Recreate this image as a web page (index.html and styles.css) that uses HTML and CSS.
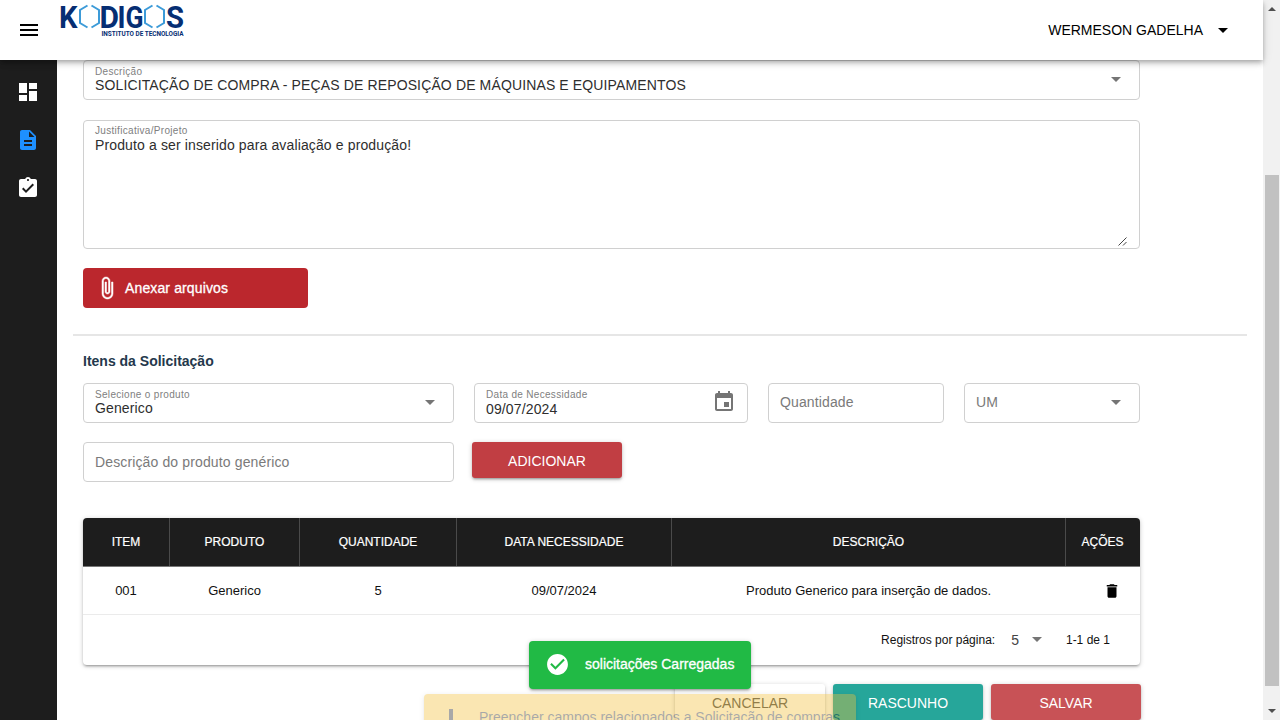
FILE: index.html
```html
<!DOCTYPE html>
<html lang="pt-BR">
<head>
<meta charset="utf-8">
<title>Kodigos - Solicitação de Compra</title>
<link rel="stylesheet" href="styles.css">
</head>
<body>
<div class="app">
  <header class="header">
    <svg class="menu" viewBox="0 0 24 24"><path d="M3 18h18v-2H3v2zm0-5h18v-2H3v2zm0-7v2h18V6H3z"/></svg>
    <svg class="logo" width="128" height="40" viewBox="0 0 128 40">
      <g class="logo-word">
        <text x="-1" y="28" textLength="18.500" lengthAdjust="spacingAndGlyphs">K</text>
        <text x="39.500" y="28" textLength="19.500" lengthAdjust="spacingAndGlyphs">D</text>
        <text x="57.500" y="28" textLength="8" lengthAdjust="spacingAndGlyphs">I</text>
        <text x="65.500" y="28" textLength="18" lengthAdjust="spacingAndGlyphs">G</text>
        <text x="106" y="28" textLength="18" lengthAdjust="spacingAndGlyphs">S</text>
      </g>
      <g class="logo-hex">
        <path d="M27.500 5.500 20 10v13l7.500 4.500M31.500 5.500 39 10v13l-7.500 4.500"/>
        <path d="M92.500 5.500 85 10v13l7.500 4.500M96.500 5.500 104 10v13l-7.500 4.500"/>
      </g>
      <text class="logo-sub" x="41.500" y="35.500" textLength="82" lengthAdjust="spacingAndGlyphs">INSTITUTO DE TECNOLOGIA</text>
    </svg>
    <div class="user">WERMESON GADELHA<svg viewBox="0 0 24 24"><path d="M7 10l5 5 5-5z"/></svg></div>
  </header>
  <div class="body">
    <nav class="side">
      <svg viewBox="0 0 24 24"><path d="M3 13h8V3H3v10zm0 8h8v-6H3v6zm10 0h8V11h-8v10zm0-18v6h8V3h-8z"/></svg>
      <svg class="active" viewBox="0 0 24 24"><path d="M14 2H6c-1.100 0-1.990.9-1.990 2L4 20c0 1.100.89 2 1.990 2H18c1.100 0 2-.9 2-2V8l-6-6zm2 16H8v-2h8v2zm0-4H8v-2h8v2zm-3-5V3.500L18.500 9H13z"/></svg>
      <svg viewBox="0 0 24 24"><path d="M19 3h-4.180C14.400 1.840 13.300 1 12 1s-2.400.84-2.820 2H5c-1.100 0-2 .9-2 2v14c0 1.100.9 2 2 2h14c1.100 0 2-.9 2-2V5c0-1.100-.9-2-2-2zm-7 0c.55 0 1 .45 1 1s-.45 1-1 1-1-.45-1-1 .45-1 1-1zm-2 14-4-4 1.410-1.410L10 14.170l6.590-6.590L18 9l-8 8z"/></svg>
    </nav>
    <main class="main">
      <div class="field"><div class="stack"><span class="label">Descrição</span><span class="value">SOLICITAÇÃO DE COMPRA - PEÇAS DE REPOSIÇÃO DE MÁQUINAS E EQUIPAMENTOS</span></div><svg class="caret" viewBox="0 0 24 24"><path d="M7 10l5 5 5-5z"/></svg></div>
      <div class="field area"><div class="stack"><span class="label">Justificativa/Projeto</span><span class="value">Produto a ser inserido para avaliação e produção!</span></div><svg class="grip" viewBox="0 0 9 9"><path d="M.5 8.500l8-8M5 8.500 8.500 5"/></svg></div>
      <div class="attach"><svg viewBox="0 0 24 24"><path d="M16.500 6v11.500c0 2.210-1.790 4-4 4s-4-1.790-4-4V5c0-1.380 1.120-2.500 2.500-2.500s2.500 1.120 2.500 2.500v10.500c0 .55-.45 1-1 1s-1-.45-1-1V6H10v9.500c0 1.380 1.120 2.500 2.500 2.500s2.500-1.120 2.500-2.500V5c0-2.210-1.790-4-4-4S7 2.790 7 5v12.500c0 3.040 2.460 5.500 5.500 5.500s5.500-2.460 5.500-5.500V6h-1.500z"/></svg><span>Anexar arquivos</span></div>
      <div class="rule"></div>
      <h2 class="title">Itens da Solicitação</h2>
      <div class="grid">
        <div class="field"><div class="stack"><span class="label">Selecione o produto</span><span class="value">Generico</span></div><svg class="caret" viewBox="0 0 24 24"><path d="M7 10l5 5 5-5z"/></svg></div>
        <div class="field"><div class="stack date"><span class="label">Data de Necessidade</span><span class="value">09/07/2024</span></div><svg class="cal" viewBox="0 0 24 24"><path d="M17 12h-5v5h5v-5zM16 1v2H8V1H6v2H5c-1.110 0-1.990.9-1.990 2L3 19c0 1.100.89 2 2 2h14c1.100 0 2-.9 2-2V5c0-1.100-.9-2-2-2h-1V1h-2zm3 18H5V8h14v11z"/></svg></div>
        <div class="field"><span class="hint up1">Quantidade</span></div>
        <div class="field"><span class="hint up1">UM</span><svg class="caret" viewBox="0 0 24 24"><path d="M7 10l5 5 5-5z"/></svg></div>
        <div class="field"><span class="hint">Descrição do produto genérico</span></div>
        <div class="btn add">ADICIONAR</div>
      </div>
      <div class="table">
        <div class="row head"><span>ITEM</span><span>PRODUTO</span><span>QUANTIDADE</span><span>DATA NECESSIDADE</span><span>DESCRIÇÃO</span><span>AÇÕES</span></div>
        <div class="row"><span>001</span><span>Generico</span><span>5</span><span>09/07/2024</span><span>Produto Generico para inserção de dados.</span><span class="del"><svg viewBox="0 0 24 24"><path d="M6 19c0 1.100.9 2 2 2h8c1.100 0 2-.9 2-2V7H6v12zM19 4h-3.500l-1-1h-5l-1 1H5v2h14V4z"/></svg></span></div>
        <div class="foot"><span>Registros por página:</span><span class="count">5</span><svg class="caret" viewBox="0 0 24 24"><path d="M7 10l5 5 5-5z"/></svg><span class="range">1-1 de 1</span></div>
      </div>
      <div class="actions"><div class="btn cancel">CANCELAR</div><div class="btn draft">RASCUNHO</div><div class="btn save">SALVAR</div></div>
    </main>
  </div>
</div>
<div class="scroll"><i class="up"></i><div class="thumb"></div><i class="down"></i></div>
<div class="toast warn"><svg viewBox="0 0 24 24"><path d="M10 3h4v12h-4zM10 17h4v4h-4z"/></svg><span>Preencher campos relacionados a Solicitação de compras</span></div>
<div class="toast ok"><svg viewBox="0 0 24 24"><path d="M12 2C6.480 2 2 6.480 2 12s4.480 10 10 10 10-4.480 10-10S17.520 2 12 2zm-2 15-5-5 1.410-1.410L10 14.170l7.590-7.590L19 8l-9 9z"/></svg><span>solicitações Carregadas</span></div>
</body>
</html>
```
FILE: styles.css
```css
* { box-sizing: border-box; }
body { margin: 0; width: 1280px; height: 720px; overflow: hidden; display: flex; position: relative; background: #fff; font: 14px/20px "Liberation Sans", Arial, sans-serif; color: #212121; }
svg { display: block; flex: none; fill: currentColor; }
.app { width: 1263px; height: 720px; display: flex; flex-direction: column; }
.header { height: 60px; flex: none; display: flex; background: #fff; color: #000; position: relative; z-index: 2; box-shadow: 0 2px 4px -1px rgba(0,0,0,.2), 0 4px 5px rgba(0,0,0,.14), 0 1px 10px rgba(0,0,0,.12); }
.menu { width: 24px; height: 24px; margin: 18px 0 0 17px; }
.logo { margin-left: 19px; overflow: visible; }
.logo-word { font: bold 32px Roboto, sans-serif; fill: #062e73; }
.logo-hex { fill: none; stroke: #3c9bd8; stroke-width: 2; }
.logo-sub { font: bold 6.600px Roboto, sans-serif; fill: #062e73; }
.user { margin: 20px 28px 0 auto; height: 20px; display: flex; align-items: center; }
.user svg { width: 24px; height: 24px; margin-left: 8px; }
.body { flex: 1; min-height: 0; display: flex; }
.side { width: 57px; flex: none; background: #1d1d1d; color: #fff; display: flex; flex-direction: column; align-items: center; gap: 24px; padding: 20px 1px 0 0; }
.side svg { width: 24px; height: 24px; }
.side .active { color: #1e90ff; }
.main { width: 1190px; padding: 0 0 0 26px; }
.field { width: 100%; height: 40px; border: 1px solid #d0d0d0; border-radius: 4px; display: flex; align-items: center; justify-content: space-between; padding: 0 11px; background: #fff; }
.main > .field { width: 1057px; }
.stack { display: flex; flex-direction: column; align-self: flex-start; padding-top: 5px; }
.label { font-size: 10px; line-height: 12px; letter-spacing: .31px; color: #808080; }
.value { line-height: 16px; letter-spacing: .131px; margin-top: -1px; color: #2e2e2e; }
.date .value { margin-top: 0; }
.hint { letter-spacing: .131px; color: #7a7a7a; }
.up1 { padding-bottom: 2px; }
.caret { width: 24px; height: 24px; color: #757575; margin-top: -2px; }
.cal { width: 24px; height: 24px; color: #757575; margin-top: -3px; }
.area { height: 129px; margin-top: 20px; }
.area .stack { padding-top: 4px; }
.area .value { margin-top: 0; }
.grip { width: 9px; height: 9px; align-self: flex-end; margin: 0 1px 2px 0; fill: none; stroke: #444; stroke-width: 1; }
.attach { width: 225px; height: 40px; margin-top: 19px; border-radius: 4px; background: #bb272d; color: #fff; display: flex; align-items: center; padding-left: 12px; gap: 6px; letter-spacing: .13px; -webkit-text-stroke: .3px #fff; }
.attach svg { width: 24px; height: 24px; stroke: #fff; stroke-width: .5; }
.rule { width: 1174px; height: 2px; margin: 26px 0 0 -10px; background: #e6e6e6; }
.title { margin: 15px 0 12px; font-size: 14px; line-height: 20px; color: #24384c; }
.grid { display: grid; grid-template-columns: 371px 274px 176px 176px; column-gap: 20px; row-gap: 19px; }
.btn { width: 150px; height: 36px; padding-top: 2px; border-radius: 3px; display: flex; align-items: center; justify-content: center; color: #fff; box-shadow: 0 1px 5px rgba(0,0,0,.2), 0 2px 2px rgba(0,0,0,.14), 0 3px 1px -2px rgba(0,0,0,.12); }
.add { background: #c13e43; margin-left: -2px; }
.table { width: 1057px; height: 147px; margin-top: 36px; border-radius: 4px; overflow: hidden; font-size: 13px; color: #111; box-shadow: 0 1px 5px rgba(0,0,0,.2), 0 2px 2px rgba(0,0,0,.14), 0 3px 1px -2px rgba(0,0,0,.12); }
.row { height: 48px; display: grid; grid-template-columns: 87px 130px 157px 215px 394px 74px; border-bottom: 1px solid #ebebeb; }
.row span { display: flex; align-items: center; justify-content: center; padding-right: 1px; }
.head { height: 49px; background: #1d1d1d; color: #fff; font-size: 12px; border-bottom-color: #777; -webkit-text-stroke: .2px #fff; }
.head span { border-right: 1px solid #4a4a4a; padding-right: 0; }
.head span:last-child { border-right: 0; padding-right: 1px; }
.row .del { padding: 0 0 0 17px; }
.del svg { width: 18px; height: 18px; color: #000; }
.foot { height: 50px; display: flex; align-items: center; justify-content: flex-end; padding-right: 30px; font-size: 12px; }
.count { font-size: 14px; margin-left: 16px; color: #444; }
.foot .caret { margin-left: 6px; }
.range { margin-left: 17px; }
.actions { width: 1058px; margin-top: 19px; display: flex; justify-content: flex-end; gap: 8px; }
.cancel { color: #555; }
.draft { background: #26a69a; }
.save { background: #c85256; }
.scroll { width: 17px; height: 720px; background: #f1f1f1; display: flex; flex-direction: column; align-items: center; padding: 7px 0; }
.scroll i { border: 4px solid transparent; }
.scroll .up { border-top: 0; border-bottom-color: #505050; }
.scroll .down { border-bottom: 0; border-top-color: #505050; margin-top: auto; }
.thumb { width: 14px; height: 511px; margin-top: 164px; background: #c1c1c1; }
.toast { position: absolute; display: flex; align-items: center; border-radius: 4px; height: 48px; box-shadow: 0 1px 5px rgba(0,0,0,.2), 0 2px 2px rgba(0,0,0,.14), 0 3px 1px -2px rgba(0,0,0,.12); z-index: 4; white-space: nowrap; }
.toast span { padding-bottom: 2px; }
.ok { left: 529px; top: 640.500px; width: 222px; background: #21ba45; color: #fff; padding-left: 16px; gap: 15px; -webkit-text-stroke: .3px #fff; }
.ok svg { width: 25px; height: 25px; }
.warn { left: 424px; top: 693.500px; width: 432px; background: #f2c037; color: #1d1d1d; padding-left: 15px; gap: 16px; opacity: .38; }
.warn svg { width: 24px; height: 24px; }
```
